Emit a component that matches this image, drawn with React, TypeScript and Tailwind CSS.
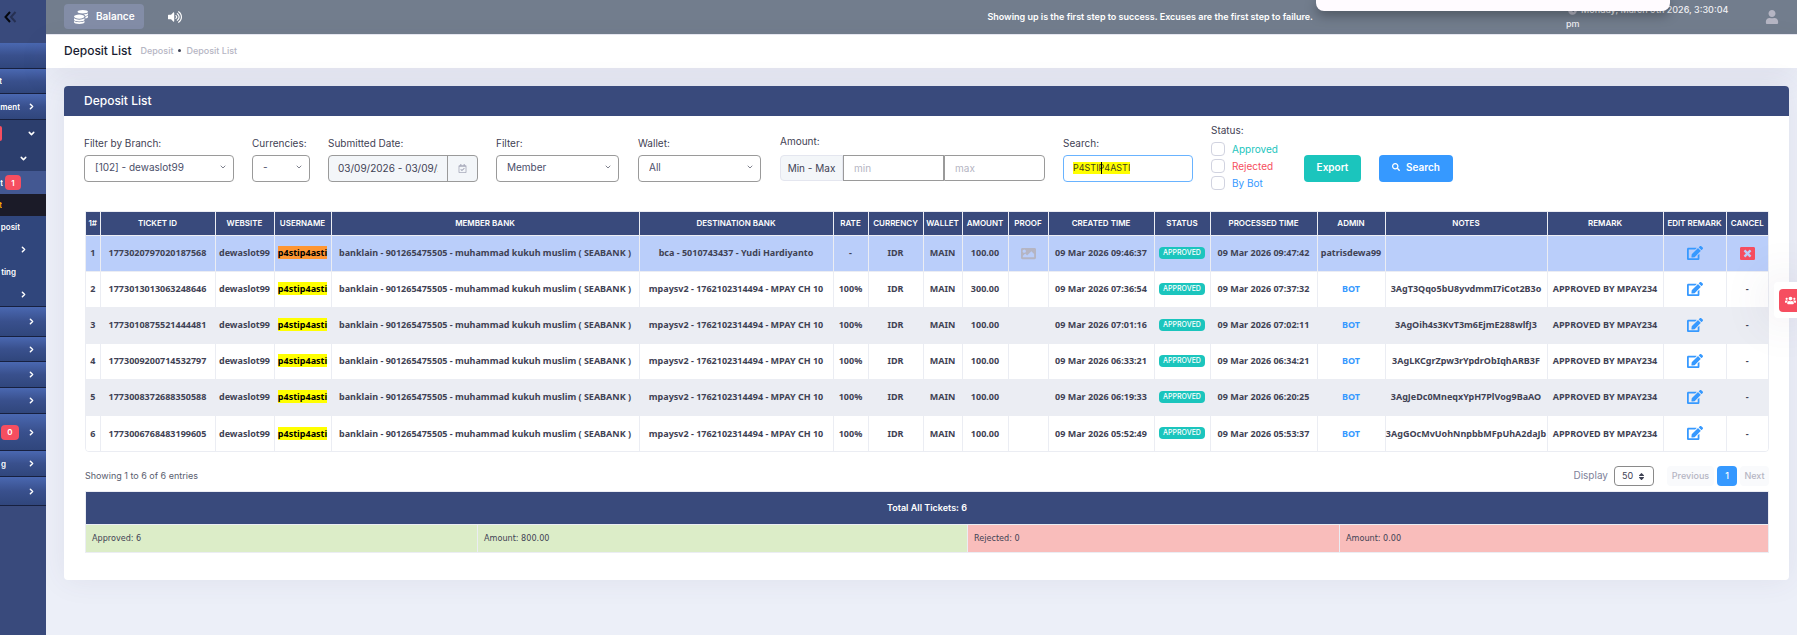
import { useState } from "react";
import type { ReactNode } from "react";
import {
  FaCoins,
  FaVolumeUp,
  FaUser,
  FaClock,
  FaSearch,
  FaImage,
  FaEdit,
  FaWindowClose,
  FaUsers,
  FaSort,
  FaRegCalendarCheck,
} from "react-icons/fa";
import { ChevronDown, ChevronRight } from "lucide-react";

const COLUMNS = [
  { label: "1#", width: "w-[14px]" },
  { label: "TICKET ID", width: "w-[115px]" },
  { label: "WEBSITE", width: "w-[59px]" },
  { label: "USERNAME", width: "w-[57px]" },
  { label: "MEMBER BANK", width: "" },
  { label: "DESTINATION BANK", width: "w-[194px]" },
  { label: "RATE", width: "w-[35px]" },
  { label: "CURRENCY", width: "w-[55px]" },
  { label: "WALLET", width: "w-[39px]" },
  { label: "AMOUNT", width: "w-[46px]" },
  { label: "PROOF", width: "w-[40px]" },
  { label: "CREATED TIME", width: "w-[106px]" },
  { label: "STATUS", width: "w-[56px]" },
  { label: "PROCESSED TIME", width: "w-[107px]" },
  { label: "ADMIN", width: "w-[68px]" },
  { label: "NOTES", width: "w-[162px]" },
  { label: "REMARK", width: "w-[116px]" },
  { label: "EDIT REMARK", width: "w-[63px]" },
  { label: "CANCEL", width: "w-[42px]" },
];

const MPAY = "mpaysv2 - 1762102314494 - MPAY CH 10";

const DEPOSITS = [
  { id: "1773020797020187568", dest: "bca - 5010743437 - Yudi Hardiyanto", rate: "-", amount: "100.00", created: "09:46:37", processed: "09:47:42", admin: "patrisdewa99", notes: "", remark: "" },
  { id: "1773013013063248646", dest: MPAY, rate: "100%", amount: "300.00", created: "07:36:54", processed: "07:37:32", admin: "BOT", notes: "3AgT3Qqo5bU8yvdmmI7iCot2B3o", remark: "APPROVED BY MPAY234" },
  { id: "1773010875521444481", dest: MPAY, rate: "100%", amount: "100.00", created: "07:01:16", processed: "07:02:11", admin: "BOT", notes: "3AgOih4s3KvT3m6EjmE288wlfJ3", remark: "APPROVED BY MPAY234" },
  { id: "1773009200714532797", dest: MPAY, rate: "100%", amount: "100.00", created: "06:33:21", processed: "06:34:21", admin: "BOT", notes: "3AgLKCgrZpw3rYpdrObIqhARB3F", remark: "APPROVED BY MPAY234" },
  { id: "1773008372688350588", dest: MPAY, rate: "100%", amount: "100.00", created: "06:19:33", processed: "06:20:25", admin: "BOT", notes: "3AgJeDc0MneqxYpH7PlVog9BaAO", remark: "APPROVED BY MPAY234" },
  { id: "1773006768483199605", dest: MPAY, rate: "100%", amount: "100.00", created: "05:52:49", processed: "05:53:37", admin: "BOT", notes: "3AgGOcMvUohNnpbbMFpUhA2daJb", remark: "APPROVED BY MPAY234" },
];

const GROUP = "border-b border-[#17203f] bg-gradient-to-b from-[#4a68b1] via-[#39508d] to-[#30467c]";
const SUB = "bg-[#30467c]";

const MENU = [
  { height: "h-[26px]", style: GROUP },
  { height: "h-[25px]", style: GROUP, text: "t", textWidth: "w-[2px]" },
  { height: "h-[26px]", style: GROUP, text: "ment", textWidth: "w-5", arrow: "right" },
  { height: "h-[26px]", style: "bg-[#2c3e6d]", badge: "", badgeBox: "w-[2px] rounded-r-xs", arrow: "down" },
  { height: "h-[25px]", style: "bg-[#2c3e6d]", arrow: "down", nested: true },
  { height: "h-[23px]", style: "bg-[#435892]", text: "t", textWidth: "w-[3px]", badge: "1", badgeBox: "ml-[2px] w-4 rounded-sm" },
  { height: "h-[22px]", style: "bg-[#1b1b28] text-[#ffa800]", text: "t", textWidth: "w-[2px]" },
  { height: "h-[22px]", style: SUB, text: "posit", textWidth: "w-5" },
  { height: "h-[22px]", style: SUB, arrow: "right", nested: true },
  { height: "h-[23px]", style: SUB, text: "ting", textWidth: "w-4" },
  { height: "h-[24px]", style: "border-b border-[#17203f] bg-[#30467c]", arrow: "right", nested: true },
  { height: "h-[30px]", style: GROUP, arrow: "right" },
  { height: "h-[25px]", style: GROUP, arrow: "right" },
  { height: "h-[26px]", style: GROUP, arrow: "right" },
  { height: "h-[26px]", style: GROUP, arrow: "right" },
  { height: "h-[37px]", style: GROUP, badge: "0", badgeBox: "ml-px w-[18px] rounded-sm", arrow: "right" },
  { height: "h-[26px]", style: GROUP, text: "g", textWidth: "w-[6px]", arrow: "right" },
  { height: "h-[29px]", style: GROUP, arrow: "right" },
];

function Sidebar() {
  return (
    <aside className="flex w-[46px] shrink-0 flex-col overflow-hidden bg-[#394a7c]">
      <button type="button" aria-label="Collapse menu" className="flex h-[43px] items-start pt-[11px] pl-1">
        <svg width="14" height="12" viewBox="0 0 14 12" fill="none" strokeWidth="2">
          <path d="M6 1 L1.500 6 L6 11" stroke="#05070d" />
          <path d="M11.500 1 L7 6 L11.500 11" stroke="#263052" />
        </svg>
      </button>
      <nav className="flex flex-col text-[8px] font-semibold text-white">
        {MENU.map((item, i) => (
          <a key={i} href="#" aria-label="Menu item" className={`flex items-center ${item.height} ${item.style}`}>
            {item.text && (
              <span className={`flex justify-end overflow-hidden ${item.textWidth}`}>{item.text}</span>
            )}
            {item.badge !== undefined && (
              <span className={`flex h-[15px] items-center justify-center bg-[#f64e60] ${item.badgeBox}`}>
                {item.badge}
              </span>
            )}
            {item.arrow && (
              <span className={`ml-auto ${item.nested ? "pr-[18px]" : "pr-[10px]"}`}>
                {item.arrow === "right" ? (
                  <ChevronRight size={9} strokeWidth={4} />
                ) : (
                  <ChevronDown size={9} strokeWidth={4} />
                )}
              </span>
            )}
          </a>
        ))}
      </nav>
    </aside>
  );
}

function Topbar() {
  return (
    <header className="flex h-[34px] items-center bg-[#727d8d] pl-[18px] text-white">
      <button type="button" className="-mt-px flex h-[25px] w-20 items-center gap-2 rounded-sm bg-[#838da7] pl-[10px] text-[10px] font-semibold">
        <FaCoins size={14} />
        Balance
      </button>
      <button type="button" aria-label="Sound" className="ml-6">
        <FaVolumeUp size={14} />
      </button>
      <p className="mr-[253px] ml-auto text-[9px] font-semibold whitespace-nowrap">
        Showing up is the first step to success. Excuses are the first step to failure.
      </p>
      <p className="w-[166px] text-[9px] leading-[14px] font-medium text-[#f0f0f4]">
        <FaClock size={9} className="mr-1 ml-[2px] inline text-[#b5b5c3]" />
        Monday, March 9th 2026, 3:30:04 pm
      </p>
      <button type="button" aria-label="Account" className="mr-[18px] ml-[33px] text-[#b5b5c3]">
        <FaUser size={14} />
      </button>
    </header>
  );
}

function Field({ label, htmlFor, className, children }: { label: string; htmlFor: string; className: string; children: ReactNode }) {
  return (
    <div className={`flex flex-col ${className}`}>
      <label htmlFor={htmlFor} className="mb-1 text-[10px] leading-4 whitespace-nowrap">
        {label}
      </label>
      {children}
    </div>
  );
}

function SelectBox({ id, value }: { id: string; value: string }) {
  return (
    <div className="relative">
      <select id={id} className="block h-[27px] w-full appearance-none rounded-sm border border-[#9a9a9a] bg-white pb-[3px] pl-[10px] text-[10px] text-[#4a4e69]">
        <option>{value}</option>
      </select>
      <ChevronDown size={8} className="pointer-events-none absolute top-2 right-[7px]" />
    </div>
  );
}

const STATUSES = [
  { label: "Approved", color: "text-[#1bc5bd]" },
  { label: "Rejected", color: "text-[#f64e60]" },
  { label: "By Bot", color: "text-[#3699ff]" },
];

function Filters() {
  const [search, setSearch] = useState("P4STIP4ASTI");

  return (
    <form className="flex h-[95px] items-start pt-[19px] text-[#3f4254]" onSubmit={(e) => e.preventDefault()}>
      <Field label="Filter by Branch:" htmlFor="branch" className="w-[150px]">
        <SelectBox id="branch" value="[102] - dewaslot99" />
      </Field>
      <Field label="Currencies:" htmlFor="currency" className="ml-[18px] w-[58px]">
        <SelectBox id="currency" value="-" />
      </Field>
      <Field label="Submitted Date:" htmlFor="date" className="ml-[18px] w-[150px]">
        <div className="flex h-[27px] overflow-hidden rounded-sm border border-[#9a9a9a] bg-[#f3f6f9]">
          <input id="date" defaultValue="03/09/2026 - 03/09/2026" className="w-[118px] px-[9px] pb-px text-[10px]" />
          <span className="flex flex-1 items-center justify-center border-l border-[#9a9a9a] text-[#a8aabb]">
            <FaRegCalendarCheck size={9} />
          </span>
        </div>
      </Field>
      <Field label="Filter:" htmlFor="filter" className="ml-[18px] w-[123px]">
        <SelectBox id="filter" value="Member" />
      </Field>
      <Field label="Wallet:" htmlFor="wallet" className="ml-[19px] w-[123px]">
        <SelectBox id="wallet" value="All" />
      </Field>
      <div className="-mt-[2px] ml-[19px] w-[265px]">
        <label htmlFor="min" className="mb-[6px] block text-[10px] leading-4">
          Amount:
        </label>
        <div className="flex h-[26px] text-[10px]">
          <span className="flex w-[63px] items-center justify-center rounded-l-sm border border-[#e4e6ef] bg-[#f3f6f9] whitespace-nowrap">
            Min - Max
          </span>
          <input id="min" placeholder="min" className="w-[101px] border border-[#9a9a9a] pl-[10px] placeholder:text-[#b5b5c3]" />
          <input aria-label="max" placeholder="max" className="w-[101px] rounded-r-sm border border-[#9a9a9a] pl-[10px] placeholder:text-[#b5b5c3]" />
        </div>
      </div>
      <Field label="Search:" htmlFor="search" className="ml-[18px] w-[130px]">
        <div className="relative flex h-[27px] items-center rounded-sm border border-[#69b3ff] pb-px pl-[9px]">
          <input
            id="search"
            value={search}
            onChange={(e) => setSearch(e.target.value)}
            className="h-3 field-sizing-content bg-[#ffff00] text-[9px] leading-3 text-[#3f3f1a] outline-none"
          />
          <span className="absolute top-[6px] left-[37px] h-3 w-px bg-black" />
        </div>
      </Field>
      <fieldset className="-mt-[13px] ml-[18px] w-[93px] text-[10px]">
        <legend className="mb-1 leading-4">Status:</legend>
        <div className="flex flex-col gap-[3px]">
          {STATUSES.map((status) => (
            <label key={status.label} className={`flex h-[14px] items-center gap-[7px] ${status.color}`}>
              <input type="checkbox" className="size-[14px] appearance-none rounded-sm border border-[#d1d3e0] bg-white checked:bg-[#3699ff]" />
              {status.label}
            </label>
          ))}
        </div>
      </fieldset>
      <button type="button" className="mt-5 h-[27px] w-[57px] rounded-sm bg-[#1bc5bd] pb-[3px] text-[10px] font-semibold text-white">
        Export
      </button>
      <button type="submit" className="mt-5 ml-[18px] flex h-[27px] w-[74px] items-center justify-center gap-[6px] rounded-sm bg-[#3699ff] pb-[3px] text-[10px] font-semibold text-white">
        <FaSearch size={8} />
        Search
      </button>
    </form>
  );
}

function DepositTable() {
  return (
    <div className="overflow-hidden rounded-b-sm border border-[#ebedf3]">
      <table className="w-full table-fixed border-collapse text-center font-['Noto_Sans',sans-serif] text-[9px] font-bold whitespace-nowrap text-[#3f4254] [&_td+td]:border-l [&_td]:border-[#ebedf3] [&_th+th]:border-l [&_th]:border-[#ebedf3]">
        <colgroup>
          {COLUMNS.map((col) => (
            <col key={col.label} className={col.width} />
          ))}
        </colgroup>
        <thead className="bg-[#394a7c] font-[Inter,sans-serif] text-[8px] text-white">
          <tr className="h-[23px]">
            {COLUMNS.map((col) => (
              <th key={col.label} className="font-semibold">
                {col.label}
              </th>
            ))}
          </tr>
        </thead>
        <tbody>
          {DEPOSITS.map((row, i) => (
            <tr
              key={row.id}
              className={`h-9 border-t border-[#ebedf3] ${i === 0 ? "bg-[#bacefa]" : i === 2 || i === 4 ? "bg-[#ebedf3]" : "bg-white"}`}
            >
              <td>{i + 1}</td>
              <td>{row.id}</td>
              <td>dewaslot99</td>
              <td>
                <mark className={`text-black ${i === 0 ? "bg-[#ff9632]" : "bg-[#ffff00]"}`}>p4stip4asti</mark>
              </td>
              <td>banklain - 901265475505 - muhammad kukuh muslim ( SEABANK )</td>
              <td>{row.dest}</td>
              <td>{row.rate}</td>
              <td>IDR</td>
              <td>MAIN</td>
              <td>{row.amount}</td>
              <td>{i === 0 && <FaImage size={15} className="mx-auto text-[#b5b5c3]" />}</td>
              <td>09 Mar 2026 {row.created}</td>
              <td>
                <span className="mx-auto flex h-3 w-[46px] items-center justify-center rounded-sm bg-[#1bc5bd] font-[Inter,sans-serif] text-[7px] font-medium text-white">
                  APPROVED
                </span>
              </td>
              <td>09 Mar 2026 {row.processed}</td>
              <td className={row.admin === "BOT" ? "text-[#3699ff]" : ""}>{row.admin}</td>
              <td>{row.notes}</td>
              <td>{row.remark}</td>
              <td>
                <button type="button" aria-label="Edit remark" className="mx-auto block text-[#3699ff]">
                  <FaEdit size={16} />
                </button>
              </td>
              <td>
                {i === 0 ? (
                  <button type="button" aria-label="Cancel" className="mx-auto block text-[#f64e60]">
                    <FaWindowClose size={15} />
                  </button>
                ) : (
                  "-"
                )}
              </td>
            </tr>
          ))}
        </tbody>
      </table>
    </div>
  );
}

function TableFooter() {
  return (
    <div className="flex h-[39px] items-center pt-2 text-[10px] text-[#595d6e]">
      <p className="text-[9px]">Showing 1 to 6 of 6 entries</p>
      <label htmlFor="display" className="ml-auto text-[#7e8299]">
        Display
      </label>
      <div className="relative ml-[6px]">
        <select id="display" className="block h-5 w-10 appearance-none rounded-sm border border-[#8a8a8a] pl-[7px] text-[9px] text-[#3f4254]">
          <option>50</option>
        </select>
        <FaSort size={9} className="pointer-events-none absolute top-[6px] right-2 text-[#3f4254]" />
      </div>
      <nav className="ml-[13px] flex gap-[3px] font-medium text-[#b5b5c3]">
        <button type="button" className="h-5 w-[47px] rounded-sm bg-[#f9fafc] text-[9px]">Previous</button>
        <button type="button" className="h-5 w-5 rounded-sm bg-[#3699ff] text-[9px] text-white">1</button>
        <button type="button" className="h-5 w-[29px] rounded-sm bg-[#f9fafc] text-[9px]">Next</button>
      </nav>
    </div>
  );
}

function Totals() {
  return (
    <table className="w-full table-fixed border-collapse border border-[#ebedf3] text-left text-[9px] text-[#3f4254]">
      <colgroup>
        <col className="w-[392px]" />
        <col className="w-[490px]" />
        <col className="w-[372px]" />
        <col />
      </colgroup>
      <thead>
        <tr className="h-[33px] bg-[#394a7c] text-center text-white">
          <th colSpan={4} className="font-semibold">Total All Tickets: 6</th>
        </tr>
      </thead>
      <tbody>
        <tr className="h-7 font-['DejaVu_Sans_Condensed','Noto_Sans',sans-serif] [&>td]:border [&>td]:border-[#ebedf3] [&>td]:pl-[6px]">
          <td className="bg-[#dcedc8]">Approved: 6</td>
          <td className="bg-[#dcedc8]">Amount: 800.00</td>
          <td className="bg-[#f9bdbb]">Rejected: 0</td>
          <td className="bg-[#f9bdbb]">Amount: 0.00</td>
        </tr>
      </tbody>
    </table>
  );
}

export default function App() {
  return (
    <div className="relative flex min-h-screen overflow-hidden bg-[#eceff8] font-[Inter,sans-serif]">
      <Sidebar />
      <div className="flex min-w-0 flex-1 flex-col">
        <Topbar />
        <div className="flex h-[34px] items-center border-t border-[#e6e6f0] bg-white pb-[2px] pl-[18px] shadow-[0_10px_30px_0_rgba(82,63,105,0.08)]">
          <h1 className="text-xs font-medium text-[#181c32]">Deposit List</h1>
          <ol className="ml-[9px] flex items-center gap-[5px] text-[9px] font-medium text-[#b5b5c3]">
            <li>
              <a href="#">Deposit</a>
            </li>
            <li className="size-[3px] rounded-full bg-[#3f4254]" />
            <li>
              <a href="#">Deposit List</a>
            </li>
          </ol>
        </div>

        <main className="mx-[18px] mt-[18px] mr-2 rounded-sm bg-white pb-[27px] shadow-[0_0_30px_0_rgba(82,63,105,0.08)]">
          <h2 className="flex h-[30px] items-center rounded-t-sm bg-[#394a7c] pl-[20px] text-xs font-medium text-white">
            Deposit List
          </h2>
          <div className="pr-5 pl-[20px]">
            <Filters />
            <div className="pl-px">
              <DepositTable />
              <TableFooter />
              <Totals />
            </div>
          </div>
        </main>
      </div>

      {/* Toast sliding in from the top */}
      <div className="absolute top-0 right-[127px] h-[11px] w-[354px] rounded-b-lg bg-[#fffbff] shadow-[0_4px_12px_0_rgba(0,0,0,0.35)]" />

      {/* Sticky side toolbar */}
      <div className="absolute top-[282px] right-0 flex h-9 w-[23px] items-center rounded-l-sm bg-white pl-[5px] shadow-[0_0_50px_0_rgba(82,63,105,0.2)]">
        <button type="button" aria-label="Members" className="flex h-[23px] w-[18px] items-center rounded-l-sm bg-[#f64e60] pl-[6px] text-white">
          <FaUsers size={11} />
        </button>
      </div>
    </div>
  );
}
